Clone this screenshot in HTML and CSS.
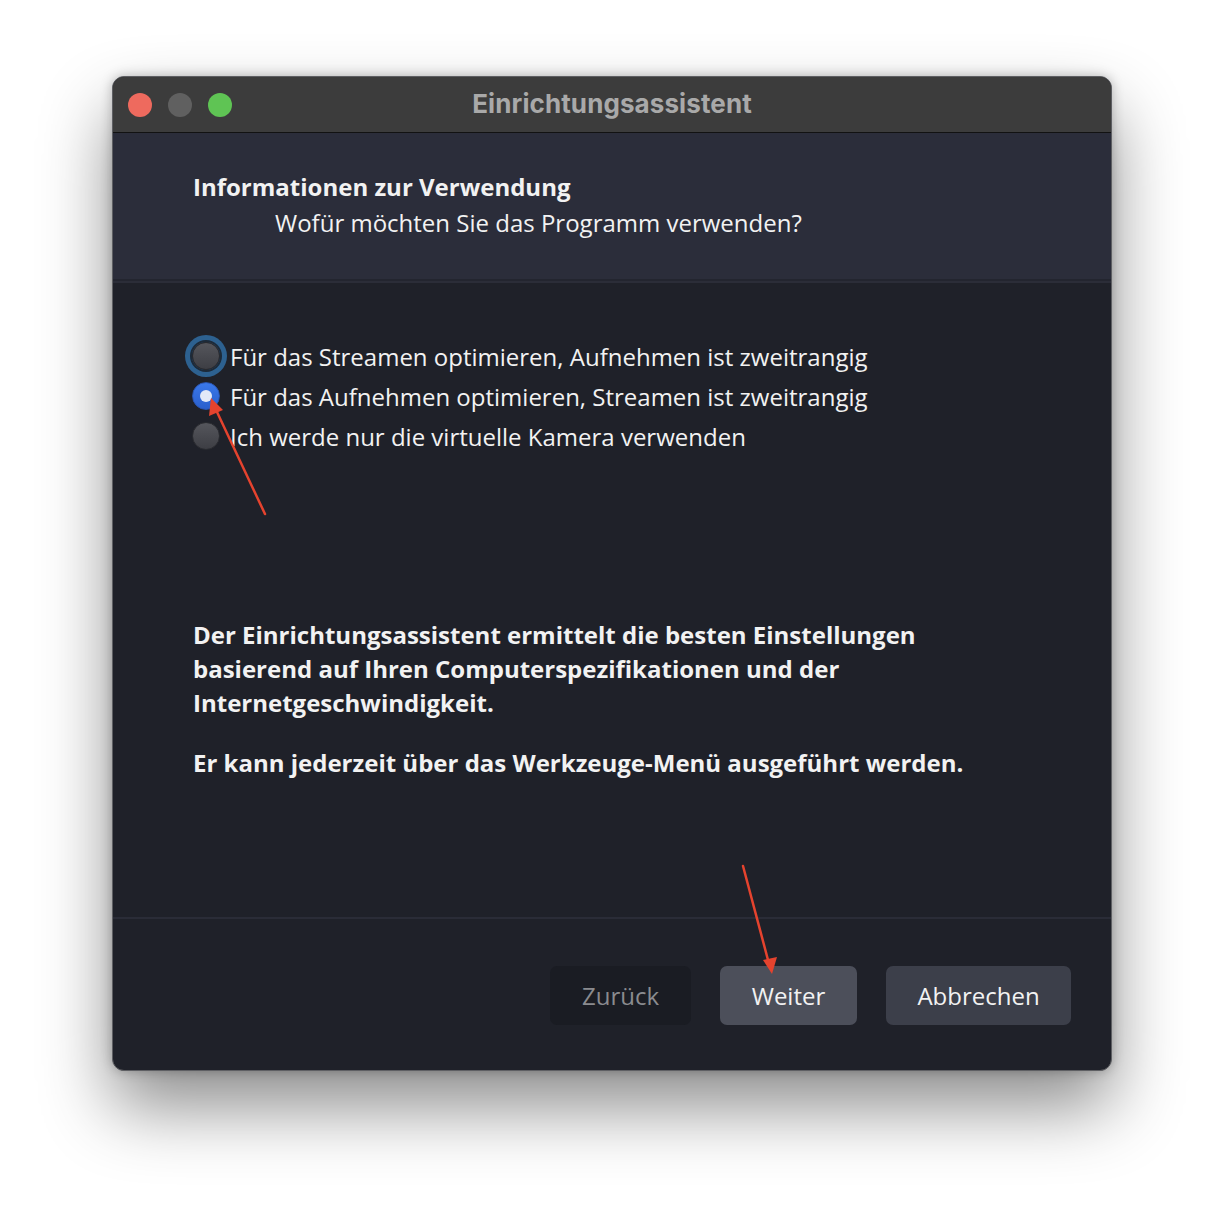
FILE: index.html
```html
<!DOCTYPE html>
<html lang="de">
<head>
<meta charset="utf-8">
<title>Einrichtungsassistent</title>
<link rel="stylesheet" href="styles.css">
</head>
<body>
<div class="page">
  <div class="window">
    <div class="titlebar">
      <div class="lights">
        <span class="light red"></span>
        <span class="light gray"></span>
        <span class="light green"></span>
      </div>
      <div class="title">Einrichtungsassistent</div>
    </div>
    <div class="header">
      <div class="h-title">Informationen zur Verwendung</div>
      <div class="h-sub">Wofür möchten Sie das Programm verwenden?</div>
    </div>
    <div class="sep"></div>
    <div class="content">
      <div class="options">
        <div class="option"><span class="radio focus"></span><span>Für das Streamen optimieren, Aufnehmen ist zweitrangig</span></div>
        <div class="option"><span class="radio checked"></span><span>Für das Aufnehmen optimieren, Streamen ist zweitrangig</span></div>
        <div class="option"><span class="radio"></span><span>Ich werde nur die virtuelle Kamera verwenden</span></div>
      </div>
      <div class="info">
        <p class="p1">Der Einrichtungsassistent ermittelt die besten Einstellungen basierend auf Ihren Computerspezifikationen und der Internetgeschwindigkeit.</p>
        <p class="p2">Er kann jederzeit über das Werkzeuge-Menü ausgeführt werden.</p>
      </div>
    </div>
    <div class="footer">
      <button class="btn back">Zurück</button>
      <button class="btn next">Weiter</button>
      <button class="btn cancel">Abbrechen</button>
    </div>
  </div>
  <svg class="arrows" width="1224" height="1220" viewBox="0 0 1224 1220">
    <line x1="265" y1="514" x2="217" y2="412" stroke="#e5432e" stroke-width="2.5" stroke-linecap="round"/>
    <polygon points="211,398 209,416 223,410" fill="#e5432e"/>
    <line x1="743" y1="866" x2="768" y2="960" stroke="#e5432e" stroke-width="2.5" stroke-linecap="round"/>
    <polygon points="772,974 763,960 777,957" fill="#e5432e"/>
  </svg>
</div>
</body>
</html>
```

FILE: styles.css
```css
html, body {
  margin: 0;
  padding: 0;
  background: #ffffff;
}

.page {
  position: relative;
  width: 1224px;
  height: 1220px;
  padding-top: 76px;
  padding-left: 112px;
  box-sizing: border-box;
}

.window {
  width: 1000px;
  height: 995px;
  box-sizing: border-box;
  border: 1px solid #5e5f63;
  border-radius: 12px;
  overflow: hidden;
  display: flex;
  flex-direction: column;
  background: #1f2129;
  box-shadow: 0 36px 70px rgba(0, 0, 0, 0.45), 0 0 12px rgba(0, 0, 0, 0.25);
  font-family: "Open Sans", "Noto Sans", sans-serif;
  color: #f2f2f2;
}

.titlebar {
  position: relative;
  height: 55px;
  flex: 0 0 auto;
  background: #3c3c3c;
  border-bottom: 1px solid #121212;
  display: flex;
  align-items: center;
}

.lights {
  display: flex;
  gap: 16px;
  padding-left: 15px;
}

.light {
  width: 24px;
  height: 24px;
  border-radius: 50%;
  display: block;
}

.light.red { background: #ee6a5e; }
.light.gray { background: #606060; }
.light.green { background: #5fc454; }

.title {
  position: absolute;
  left: 0;
  right: 0;
  top: 0;
  bottom: 0;
  display: flex;
  align-items: center;
  justify-content: center;
  font-family: Inter, "Liberation Sans", sans-serif;
  font-weight: 700;
  font-size: 26px;
  color: #a9a9a9;
  padding-bottom: 3px;
  letter-spacing: 0.1px;
}

.header {
  height: 146px;
  flex: 0 0 auto;
  box-sizing: border-box;
  background: #2b2d3a;
  padding: 39px 0 0 80px;
}

.h-title {
  font-weight: 700;
  font-size: 24px;
  line-height: 30px;
}

.h-sub {
  font-size: 24px;
  line-height: 30px;
  margin-top: 6px;
  margin-left: 82px;
}

.sep {
  height: 2px;
  flex: 0 0 auto;
  background: #23252f;
  border-bottom: 2px solid #2b2d38;
}

.content {
  flex: 1 1 auto;
  box-sizing: border-box;
  padding: 53px 0 0 79px;
  border-bottom: 2px solid #2a2c37;
}

.options {
  display: flex;
  flex-direction: column;
}

.option {
  display: flex;
  align-items: center;
  gap: 10px;
  height: 40px;
  font-size: 24px;
}

.radio {
  width: 28px;
  height: 28px;
  border-radius: 50%;
  box-sizing: border-box;
  flex: 0 0 auto;
  background: linear-gradient(#55565c, #3d3e44);
  border: 1px solid #2a2b30;
  position: relative;
}

.radio.focus {
  box-shadow: 0 0 0 2px #1d2a38, 0 0 0 7px #2d6190;
}

.radio.checked {
  background: linear-gradient(#3a78ea, #2a5fcc);
  border-color: #2a55b0;
}

.radio.checked::after {
  content: "";
  position: absolute;
  width: 12px;
  height: 12px;
  border-radius: 50%;
  background: #e2e9f8;
  left: 7px;
  top: 7px;
}

.info {
  margin-top: 162px;
  width: 800px;
  padding-left: 1px;
}

.info p {
  margin: 0;
  font-weight: 700;
  font-size: 24px;
  line-height: 34px;
}

.info .p2 {
  margin-top: 26px;
  white-space: nowrap;
}

.footer {
  height: 151px;
  flex: 0 0 auto;
  box-sizing: border-box;
  padding: 47px 40px 0 0;
  display: flex;
  justify-content: flex-end;
  align-items: flex-start;
  gap: 29px;
}

.btn {
  height: 59px;
  padding: 0;
  border: none;
  border-radius: 7px;
  font-family: "Open Sans", "Noto Sans", sans-serif;
  font-size: 24px;
  color: #f2f2f2;
}

.btn.back {
  background: #1a1c23;
  color: #8a8b8f;
  width: 141px;
}

.btn.next {
  background: #4c4f5a;
  width: 137px;
}

.btn.cancel {
  background: #3c3f4a;
  width: 185px;
}

.arrows {
  position: absolute;
  left: 0;
  top: 0;
  pointer-events: none;
}
```
